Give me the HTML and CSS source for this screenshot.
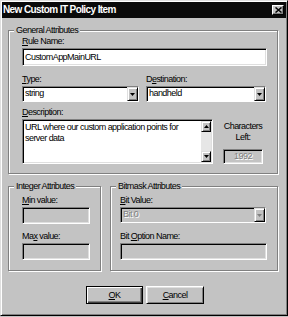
FILE: index.html
```html
<!DOCTYPE html>
<html lang="en">
<head>
  <meta charset="UTF-8">
  <title>New Custom IT Policy Item</title>
  <link rel="stylesheet" href="styles.css">
</head>
<body>
  <div class="window">
    <div class="titlebar">
      <span class="title">New Custom IT Policy Item</span>
      <span class="close">
        <svg width="7" height="6" viewBox="0 0 7 6"><path d="M0.5 0.5l6 5M6.5 0.5l-6 5" stroke="#000" stroke-width="1.5"/></svg>
      </span>
    </div>

    <div class="content">
      <fieldset class="group general">
        <legend>General Attributes</legend>
        <div class="group-body">
          <label class="lbl"><u>R</u>ule Name:</label>
          <div class="edit">CustomAppMainURL</div>

          <div class="pair">
            <div>
              <label class="lbl"><u>T</u>ype:</label>
              <div class="combo">
                <span class="val">string</span>
                <span class="drop"><svg width="5" height="3" viewBox="0 0 5 3"><path d="M0 0h5L2.5 3z"/></svg></span>
              </div>
            </div>
            <div>
              <label class="lbl">D<u>e</u>stination:</label>
              <div class="combo">
                <span class="val">handheld</span>
                <span class="drop"><svg width="5" height="3" viewBox="0 0 5 3"><path d="M0 0h5L2.5 3z"/></svg></span>
              </div>
            </div>
          </div>

          <div class="desc-row">
            <div class="desc-col">
              <label class="lbl"><u>D</u>escription:</label>
              <div class="memo">
                <div class="memo-text">URL where our custom application points for server data</div>
                <div class="vscroll">
                  <span class="sbtn"><svg width="5" height="3" viewBox="0 0 5 3"><path d="M0 3h5L2.5 0z"/></svg></span>
                  <span class="track"></span>
                  <span class="sbtn"><svg width="5" height="3" viewBox="0 0 5 3"><path d="M0 0h5L2.5 3z"/></svg></span>
                </div>
              </div>
            </div>
            <div class="chars">
              Characters<br>Left:
              <div class="count">1992</div>
            </div>
          </div>
        </div>
      </fieldset>

      <div class="lower">
        <fieldset class="group integer">
          <legend>Integer Attributes</legend>
          <div class="group-body">
            <label class="lbl first"><u>M</u>in value:</label>
            <div class="edit off"></div>
            <label class="lbl next">Ma<u>x</u> value:</label>
            <div class="edit off"></div>
          </div>
        </fieldset>

        <fieldset class="group bitmask">
          <legend>Bitmask Attributes</legend>
          <div class="group-body">
            <label class="lbl first"><u>B</u>it Value:</label>
            <div class="combo off">
              <span class="val dis">Bit 0</span>
              <span class="drop"><svg width="5" height="3" viewBox="0 0 5 3"><path d="M0 0h5L2.5 3z" fill="#808080"/></svg></span>
            </div>
            <label class="lbl next">Bit <u>O</u>ption Name:</label>
            <div class="edit off"></div>
          </div>
        </fieldset>
      </div>

      <div class="buttons">
        <button class="btn default"><u>O</u>K</button>
        <button class="btn"><u>C</u>ancel</button>
      </div>
    </div>
  </div>
</body>
</html>
```

FILE: styles.css
```css
* {
  margin: 0;
  padding: 0;
  box-sizing: border-box;
}

body {
  background: #c3c3c3;
  font-family: "Liberation Sans", Arial, sans-serif;
  font-size: 9px;
  letter-spacing: -0.55px; /* the dialog font is much narrower than Arial */
  color: #000;
}

/* window frame */
.window {
  width: 288px;
  height: 316px;
  padding: 1px;
  border: 1px solid;
  border-color: #dfdfdf #000 #000 #dfdfdf;
  box-shadow: inset 1px 1px #fff, inset -1px -1px #808080;
  background: #c3c3c3;
}

.titlebar {
  display: flex;
  align-items: center;
  height: 16px;
  padding-left: 1px;
  background: #0a0a0a;
  color: #fff;
}

.title {
  font-size: 10px;
  font-weight: bold;
  letter-spacing: -0.6px;
  line-height: 16px;
  white-space: nowrap;
}

.close {
  display: flex;
  align-items: center;
  justify-content: center;
  width: 12px;
  height: 10px;
  margin-left: auto;
  margin-right: 2px;
  background: #c3c3c3;
  border: 1px solid;
  border-color: #fff #000 #000 #fff;
  box-shadow: inset -1px -1px #808080;
}

.content {
  padding: 0 8px 0 6px;
}

/* group boxes */
.group {
  min-width: 0;
  border: 1px solid #808080;
  box-shadow: 1px 1px #fff, inset 1px 1px #fff;
}

.group legend {
  margin-left: 5px;
  padding: 0 2px;
  line-height: 12px;
  background: #c3c3c3;
}

.general {
  margin-top: 6px;
}

.general .group-body {
  padding: 0 10px 9px 13px;
}

.lbl {
  display: block;
  line-height: 11px;
  margin-bottom: 1px;
  white-space: nowrap;
}

/* sunken controls */
.edit,
.combo,
.memo,
.count {
  border: 1px solid;
  border-color: #808080 #fff #fff #808080;
  background: #fff;
}

.edit,
.memo,
.count {
  box-shadow: inset 1px 1px #000, inset -1px -1px #dfdfdf;
}

.edit {
  height: 18px;
  padding: 1px 1px 1px 2px;
  line-height: 14px;
  white-space: nowrap;
}

.edit.off {
  height: 17px;
  background: #c3c3c3;
}

.pair {
  display: grid;
  grid-template-columns: 117px 120px;
  column-gap: 7px;
  margin-top: 8px;
}

.combo {
  display: flex;
  height: 16px;
}

.combo .val {
  flex: 1;
  padding-left: 2px;
  line-height: 13px;
  box-shadow: inset 1px 1px #000;
  white-space: nowrap;
}

.combo.off {
  width: 146px;
  background: #c3c3c3;
}

.drop,
.sbtn {
  display: flex;
  align-items: center;
  justify-content: center;
  background: #c3c3c3;
  border: 1px solid;
  border-color: #dfdfdf #000 #000 #dfdfdf;
  box-shadow: inset 1px 1px #fff, inset -1px -1px #808080;
}

.drop {
  width: 11px;
}

.desc-row {
  display: flex;
  margin-top: 5px;
}

.desc-col {
  flex: none;
  width: 191px;
}

.memo {
  display: flex;
  height: 45px;
  padding: 1px;
}

.memo-text {
  flex: 1;
  line-height: 11px;
  padding: 1px 6px 0 1px;
}

.vscroll {
  display: flex;
  flex-direction: column;
  width: 10px;
}

.sbtn {
  height: 11px;
}

.track {
  flex: 1;
  background: #e6e6e6;
}

.chars {
  flex: none;
  width: 60px;
  margin-right: -6px;
  padding-top: 14px;
  line-height: 11px;
  text-align: center;
}

.count {
  width: 40px;
  height: 15px;
  margin: 6px auto 0;
  background: #c3c3c3;
  line-height: 13px;
  text-align: center;
  color: #808080;
  text-shadow: 1px 1px #fff;
}

.dis {
  color: #808080;
  text-shadow: 1px 1px #fff;
}

/* lower groups */
.lower {
  display: flex;
  gap: 9px;
  margin-top: 6px;
}

.integer {
  flex: none;
  width: 93px;
}

.integer .group-body {
  padding: 0 10px 10px 13px;
}

.bitmask {
  flex: none;
  width: 168px;
}

.bitmask .group-body {
  padding: 0 10px 10px 9px;
}

.lbl.first {
  margin-top: 3px;
}

.lbl.next {
  margin-top: 7px;
}

.bitmask .lbl.next {
  margin-top: 8px;
}

/* buttons */
.buttons {
  display: flex;
  justify-content: center;
  gap: 3px;
  margin-top: 15px;
  padding-left: 4px;
}

.btn {
  width: 58px;
  height: 18px;
  font: inherit;
  letter-spacing: inherit;
  line-height: 14px;
  color: #000;
  background: #c3c3c3;
  border: 1px solid;
  border-color: #fff #000 #000 #fff;
  box-shadow: inset 1px 1px #dfdfdf, inset -1px -1px #808080;
}

.btn.default {
  width: 57px;
  border-color: #000;
  box-shadow: inset 1px 1px #fff, inset -1px -1px #404040, inset -2px -2px #808080;
}
```
